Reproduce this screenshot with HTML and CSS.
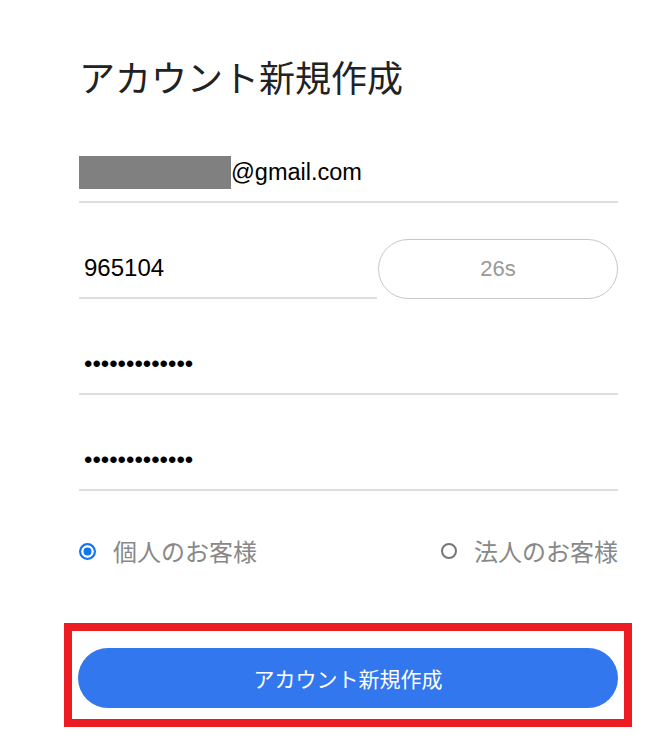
FILE: index.html
```html
<!DOCTYPE html>
<html lang="ja">
<head>
<meta charset="utf-8">
<title>アカウント新規作成</title>
<link rel="stylesheet" href="styles.css">
</head>
<body>
<main class="page">
  <h1 class="title">アカウント新規作成</h1>
  <form class="form">
    <div class="field field-email"><span class="redact"></span>@gmail.com</div>
    <div class="code-row">
      <input class="field field-code" type="text" value="965104">
      <button type="button" class="resend">26s</button>
    </div>
    <input class="field field-pass" type="password" value="abcdefghijklm">
    <input class="field field-pass" type="password" value="abcdefghijklm">
    <div class="radios">
      <label class="radio-opt"><span class="radio radio-on"></span><span class="radio-label">個人のお客様</span></label>
      <label class="radio-opt"><span class="radio"></span><span class="radio-label">法人のお客様</span></label>
    </div>
    <div class="highlight">
      <button type="button" class="submit">アカウント新規作成</button>
    </div>
  </form>
</main>
</body>
</html>
```

FILE: styles.css
```css
* { box-sizing: border-box; }

body {
  margin: 0;
  background: #ffffff;
  font-family: "Liberation Sans", "Noto Sans CJK JP", sans-serif;
}

.page {
  width: 539px;
  margin-left: 79px;
  padding-top: 50px;
}

.title {
  margin: 0;
  font-family: "Noto Sans CJK JP", sans-serif;
  font-size: 36px;
  line-height: 52px;
  font-weight: 400;
  color: #222222;
}

.form {
  display: flex;
  flex-direction: column;
  margin-top: 41px;
}

.field {
  display: flex;
  align-items: center;
  height: 60px;
  width: 100%;
  border: 0;
  border-bottom: 2px solid #dddddd;
  padding: 0 0 0 5px;
  margin: 0 0 36px 0;
  font-family: "Liberation Sans", sans-serif;
  font-size: 23.5px;
  color: #000000;
  background: transparent;
  outline: none;
}

.field-email {
  padding-left: 0;
}

.field-code,
.field-pass {
  font-size: 24px;
}

.redact {
  display: inline-block;
  width: 152px;
  height: 33px;
  background: #808080;
}

.code-row {
  display: flex;
  align-items: flex-end;
  margin-bottom: 36px;
}

.field-code {
  flex: 1;
  margin: 0;
  width: auto;
  min-width: 0;
}

.resend {
  width: 240px;
  height: 60px;
  margin-left: 1px;
  border: 1px solid #c8c8c8;
  border-radius: 30px;
  background: #ffffff;
  color: #999999;
  font-family: "Liberation Sans", sans-serif;
  font-size: 22px;
}

.radios {
  display: flex;
  justify-content: space-between;
  align-items: center;
  height: 30px;
  margin-top: 9px;
}

.radio-opt {
  display: flex;
  align-items: center;
  gap: 17px;
}

.radio {
  display: block;
  width: 16px;
  height: 16px;
  border-radius: 50%;
  border: 2px solid #767676;
  flex: none;
}

.radio-on {
  width: 17px;
  height: 17px;
  border-color: #0f76f5;
  background: #0f76f5;
  box-shadow: inset 0 0 0 2.5px #ffffff;
}

.radio-label {
  font-family: "Noto Sans CJK JP", sans-serif;
  font-size: 24px;
  line-height: 30px;
  color: #888888;
}

.highlight {
  margin: 57px -14px 0 -15px;
  border: 8px solid #ed1c24;
  padding: 17px 6px 11px 6px;
}

.submit {
  display: block;
  width: 100%;
  height: 60px;
  border: 0;
  border-radius: 30px;
  background: #3277ed;
  color: #ffffff;
  font-family: "Noto Sans CJK JP", sans-serif;
  font-size: 21px;
}
```
